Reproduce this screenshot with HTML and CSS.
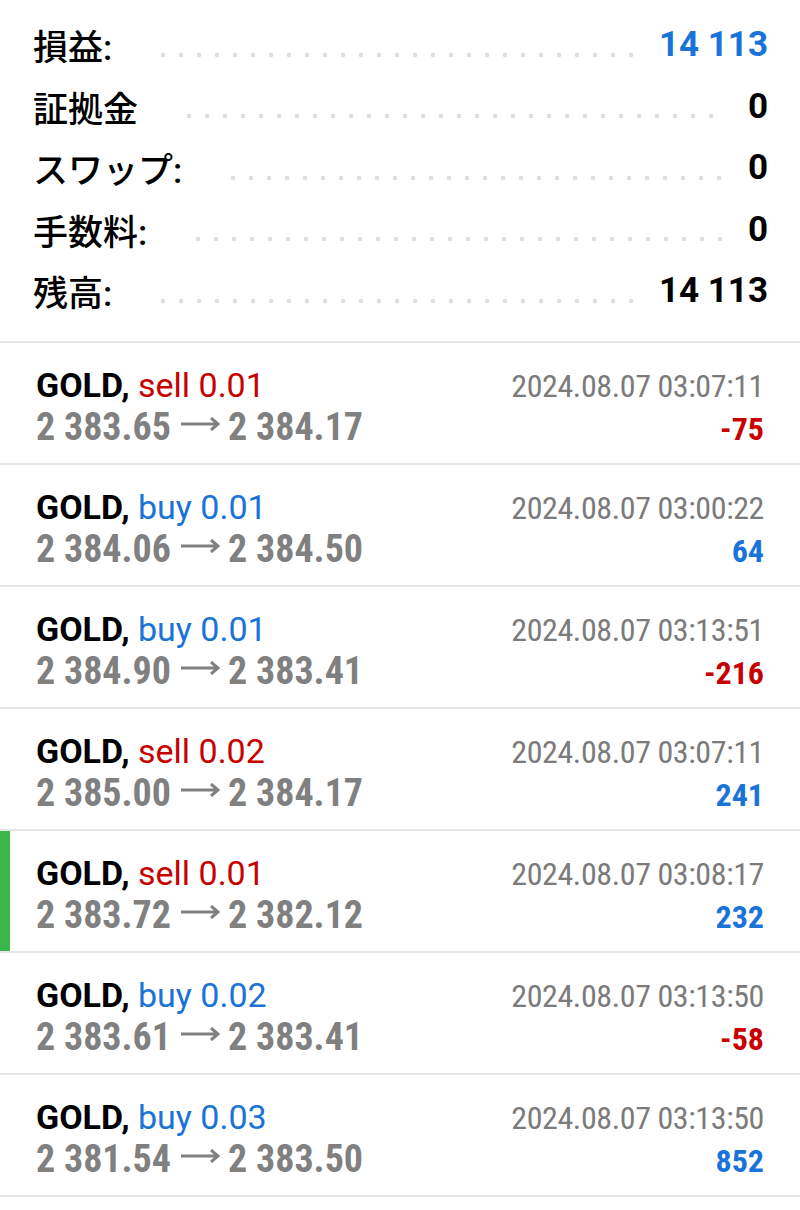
FILE: index.html
```html
<!DOCTYPE html>
<html lang="ja">
<head>
    <meta charset="UTF-8">
    <meta name="viewport" content="width=device-width, initial-scale=1.0">
    <title>取引履歴</title>
    <link rel="stylesheet" href="styles.css">
</head>
<body>
    <!-- Summary -->
    <div class="summary">
        <div class="sum-row">
            <span class="sum-label">損益:</span>
            <span class="dots"></span>
            <span class="sum-value blue">14 113</span>
        </div>
        <div class="sum-row">
            <span class="sum-label">証拠金</span>
            <span class="dots"></span>
            <span class="sum-value">0</span>
        </div>
        <div class="sum-row">
            <span class="sum-label">スワップ:</span>
            <span class="dots"></span>
            <span class="sum-value">0</span>
        </div>
        <div class="sum-row">
            <span class="sum-label">手数料:</span>
            <span class="dots"></span>
            <span class="sum-value">0</span>
        </div>
        <div class="sum-row">
            <span class="sum-label">残高:</span>
            <span class="dots"></span>
            <span class="sum-value">14 113</span>
        </div>
    </div>

    <!-- Deals -->
    <div class="trades">
        <div class="trade">
            <div class="line1"><span class="deal"><b>GOLD,</b> <span class="red">sell 0.01</span></span><span class="date">2024.08.07 03:07:11</span></div>
            <div class="line2"><span class="prices">2 383.65<svg class="arrow" viewBox="0 0 40 14"><path d="M1 7H38M31 1L38 7L31 13"/></svg>2 384.17</span><span class="profit red">-75</span></div>
        </div>
        <div class="trade">
            <div class="line1"><span class="deal"><b>GOLD,</b> <span class="blue">buy 0.01</span></span><span class="date">2024.08.07 03:00:22</span></div>
            <div class="line2"><span class="prices">2 384.06<svg class="arrow" viewBox="0 0 40 14"><path d="M1 7H38M31 1L38 7L31 13"/></svg>2 384.50</span><span class="profit blue">64</span></div>
        </div>
        <div class="trade">
            <div class="line1"><span class="deal"><b>GOLD,</b> <span class="blue">buy 0.01</span></span><span class="date">2024.08.07 03:13:51</span></div>
            <div class="line2"><span class="prices">2 384.90<svg class="arrow" viewBox="0 0 40 14"><path d="M1 7H38M31 1L38 7L31 13"/></svg>2 383.41</span><span class="profit red">-216</span></div>
        </div>
        <div class="trade">
            <div class="line1"><span class="deal"><b>GOLD,</b> <span class="red">sell 0.02</span></span><span class="date">2024.08.07 03:07:11</span></div>
            <div class="line2"><span class="prices">2 385.00<svg class="arrow" viewBox="0 0 40 14"><path d="M1 7H38M31 1L38 7L31 13"/></svg>2 384.17</span><span class="profit blue">241</span></div>
        </div>
        <div class="trade selected">
            <div class="line1"><span class="deal"><b>GOLD,</b> <span class="red">sell 0.01</span></span><span class="date">2024.08.07 03:08:17</span></div>
            <div class="line2"><span class="prices">2 383.72<svg class="arrow" viewBox="0 0 40 14"><path d="M1 7H38M31 1L38 7L31 13"/></svg>2 382.12</span><span class="profit blue">232</span></div>
        </div>
        <div class="trade">
            <div class="line1"><span class="deal"><b>GOLD,</b> <span class="blue">buy 0.02</span></span><span class="date">2024.08.07 03:13:50</span></div>
            <div class="line2"><span class="prices">2 383.61<svg class="arrow" viewBox="0 0 40 14"><path d="M1 7H38M31 1L38 7L31 13"/></svg>2 383.41</span><span class="profit red">-58</span></div>
        </div>
        <div class="trade">
            <div class="line1"><span class="deal"><b>GOLD,</b> <span class="blue">buy 0.03</span></span><span class="date">2024.08.07 03:13:50</span></div>
            <div class="line2"><span class="prices">2 381.54<svg class="arrow" viewBox="0 0 40 14"><path d="M1 7H38M31 1L38 7L31 13"/></svg>2 383.50</span><span class="profit blue">852</span></div>
        </div>
    </div>
</body>
</html>
```

FILE: styles.css
```css
body {
    margin: 0;
    background: #ffffff;
    font-family: Roboto, "Noto Sans CJK JP", sans-serif;
    color: #000000;
}
.blue {
    color: #1a73d9;
}
.red {
    color: #c80000;
}
.summary {
    padding: 14px 32px 19px 33px;
    border-bottom: 2px solid #e6e6e6;
}
.sum-row {
    display: flex;
    align-items: center;
    height: 61.5px;
}
.sum-label {
    font-size: 35px;
    font-weight: 500;
}
.dots {
    flex: 1;
    align-self: stretch;
    margin: 0 24px 0 42px;
    background: radial-gradient(circle, #dedede 2px, transparent 2.6px) left calc(50% + 10px) / 18px 6px repeat-x;
}
.sum-value {
    font-size: 35px;
    font-weight: bold;
}
.trade {
    padding: 22px 36px 14px 36px;
    border-bottom: 2px solid #e6e6e6;
}
.trade.selected {
    box-shadow: inset 10px 0 0 #3cb54a;
}
.line1, .line2 {
    display: flex;
    justify-content: space-between;
    align-items: baseline;
}
.line1 {
    height: 40px;
    line-height: 40px;
    font-size: 32px;
}
.line2 {
    height: 44px;
    line-height: 44px;
}
.deal {
    font-size: 34px;
}
.date, .prices, .profit {
    font-stretch: condensed;
}
.date {
    color: #7b7b7b;
    letter-spacing: -0.4px;
}
.prices {
    font-size: 38px;
    font-stretch: 78%;
    font-weight: bold;
    color: #808080;
}
.arrow {
    width: 40px;
    height: 14px;
    margin: 0 8px 0 9px;
    vertical-align: 9px;
    fill: none;
    stroke: #808080;
    stroke-width: 3;
}
.profit {
    font-size: 32px;
    font-weight: bold;
}
```
